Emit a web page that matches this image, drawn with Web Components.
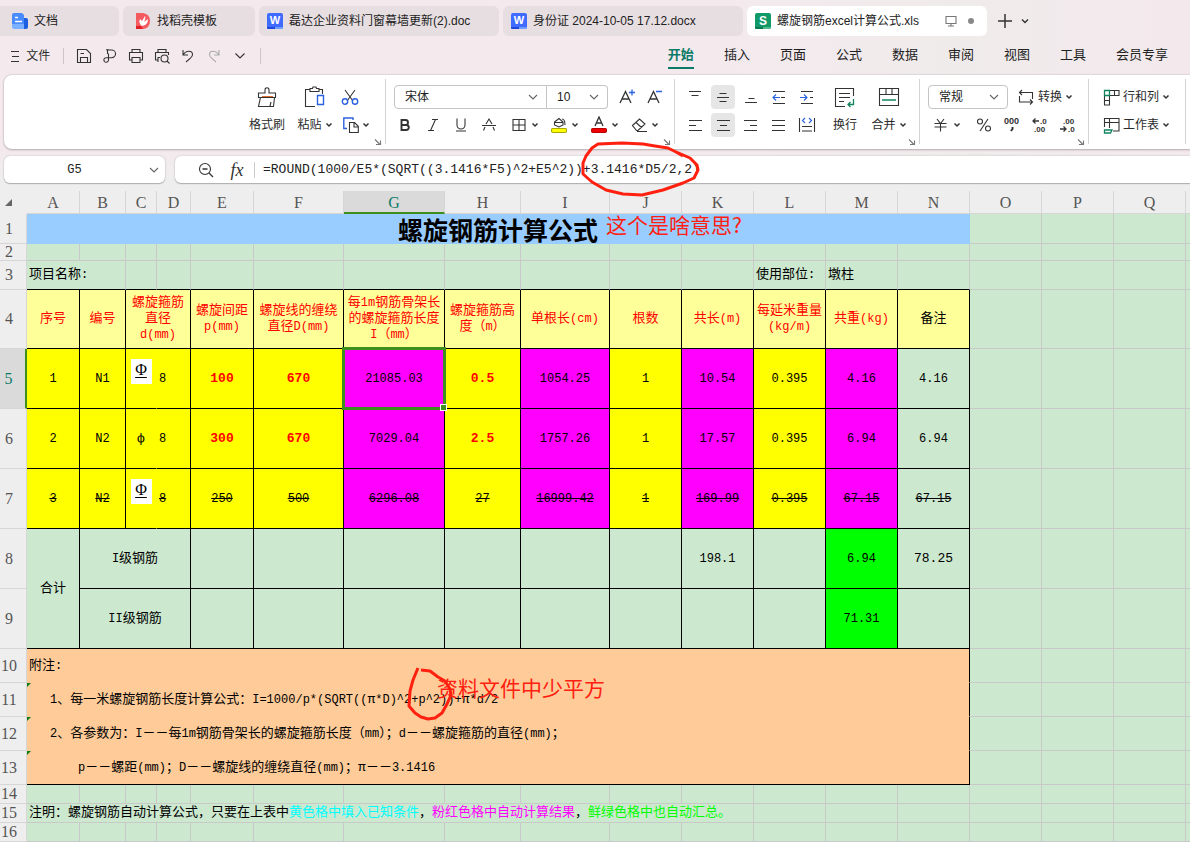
<!DOCTYPE html>
<html lang="zh-CN">
<head>
<meta charset="utf-8">
<title>螺旋钢筋excel计算公式.xls</title>
<style>
html,body{margin:0}
body{font:12px/16px "Liberation Sans","Noto Sans CJK SC",sans-serif;color:#2b2b2b;background:#cce8cf}
</style>
</head>
<body>
<office-app></office-app>
<script>
const define = (name, html, setup) => {
  const tpl = document.createElement('template');
  tpl.innerHTML = html;
  customElements.define(name, class extends HTMLElement {
    constructor() {
      super();
      this.attachShadow({ mode: 'open' }).append(tpl.content.cloneNode(true));
    }
    connectedCallback() {
      if (this.ready) return;
      this.ready = true;
      if (setup) setup(this, this.shadowRoot);
    }
  });
};

const svg = (w, h, body) => `<svg width="${w}" height="${h}" viewBox="0 0 ${w} ${h}" fill="none" stroke="#333" stroke-width="1.1" aria-hidden="true">${body}</svg>`;
const caret = svg(8, 8, '<path d="M1.500 2.500L4 5L6.500 2.500" stroke-width="1.500"/>');
const chevron = svg(10, 8, '<path d="M1 2L5 6L9 2" stroke="#666"/>');
const sans = 'font-family="Liberation Sans" stroke="none" fill="#333"';

const icons = {
  menu: svg(10, 12, '<path d="M1 1.500H9M2 6.500H9M1 11.500H9"/>'),
  save: svg(16, 16, '<path d="M1.500 1.500H10.500L14.500 5.500V14.500H1.500ZM4.500 14V9.500H11.500V14M4.500 5.500H8"/>'),
  link: svg(16, 16, '<path d="M5.500 6V2H9.500A4 3.800 0 0 1 9.500 9.700H4.500A2.300 2.300 0 1 0 6.500 12V5.500M4 1.800H7"/>'),
  print: svg(16, 16, '<path d="M4 4.500V1.500H12V4.500M4 12H1.500V4.500H14.500V12H12M4 9.500H12V14.500H4Z"/>'),
  preview: svg(16, 16, '<path d="M4 4.500V1.500H12V4.500M4 12H1.500V4.500H14.500V7M4 14V9.500H6"/><circle cx="10.500" cy="10.500" r="3.500"/><path d="M13 13L15.500 15.500"/>'),
  undo: svg(16, 16, '<path d="M3 2V7H8M3.300 6.700C6 2 13 2 12.500 7C12 10 9 11 6 14"/>'),
  redo: svg(16, 16, '<g stroke="#aaa"><path d="M13 2V7H8M12.700 6.700C10 2 3 2 3.500 7C4 10 7 11 10 14"/></g>'),
  more: svg(12, 10, '<path d="M1.500 2.500L6 7L10.500 2.500"/>'),
  less: svg(10, 10, '<path d="M2 3.500L5 6.500L8 3.500" stroke-width="1.400"/>'),
  plus: svg(16, 16, '<path d="M8 1V15M1 8H15" stroke-width="1.500"/>'),
  brush: svg(20, 22, '<path d="M8 7V4C8 1 12 1 12 4V7H18.500V11.500H1.500V7ZM3.500 11.500L1.500 20.500H16.500L17.500 11.500M13 20L14 16"/><path d="M5 10.500H16" stroke="#e06c2c"/>'),
  paste: svg(22, 22, '<path d="M6 3.500H1.500V20.500H11M15 3.500H18.500V8M6 5.500V2.500H8.500L9 1H12L12.500 2.500H15V5.500Z"/><path d="M13.500 9.500H19.500V18.500H13.500Z" stroke="#2b62e0" stroke-width="1.400"/>'),
  cut: svg(18, 16, '<path d="M4 1L12 12M14 1L6 12"/><g stroke="#2b62e0" stroke-width="1.400"><circle cx="4" cy="12.500" r="2.700"/><circle cx="14" cy="12.500" r="2.700"/></g>'),
  copy: svg(16, 16, '<path d="M4 11.500H.800V1H10V3" stroke="#2b62e0" stroke-width="1.400"/><path d="M6.500 5.500H11.500L15.300 9.300V15.500H6.500ZM11 6V10H15"/>'),
  grow: svg(18, 18, `<path d="M2 15L7.500 3.500L13 15M4 11H11" stroke-width="1.300"/><path d="M11 4.500H17M14 1.500V7.500" stroke="#2b62e0" stroke-width="1.300"/>`),
  shrink: svg(18, 18, `<path d="M2 15L7.500 3.500L13 15M4 11H11" stroke-width="1.300"/><path d="M10 3.500H16" stroke="#2b62e0" stroke-width="1.300"/>`),
  bold: svg(16, 16, '<path d="M4.500 3H8.500A2.400 2.400 0 0 1 8.500 8H4.500ZM4.500 8H9.300A2.500 2.500 0 0 1 9.300 13H4.500Z" stroke-width="1.900"/>'),
  italic: svg(16, 16, '<path d="M7 2.500H13M3 13.500H9M10.500 2.500L5.500 13.500"/>'),
  underline: svg(16, 16, '<path d="M4 1.500V8A4 4 0 0 0 12 8V1.500M3 14H13"/>'),
  strike: svg(16, 16, '<path d="M1 8.500H15M5 7L8 2L11 7M4 10L2.500 13.500M12 10L13.500 13.500"/>'),
  borders: svg(16, 16, '<path d="M2 2.500H14V13.500H2ZM8 2.500V13.500M2 8H14"/>'),
  fill: svg(16, 18, '<path d="M3.500 6L8 2.500L12 6V9L8 11L3.500 9ZM4 6.500H12M11 3C14 3 14 6 14 9"/><rect x="0.500" y="12.500" width="15" height="4" rx="1.500" fill="#ff0" stroke="#aaa800"/>'),
  color: svg(16, 18, '<path d="M4 10L8 1L12 10M5.500 7H10.500" stroke-width="1.300"/><rect x="0.500" y="12.500" width="15" height="4" rx="1.500" fill="#f00000" stroke="#b00"/>'),
  eraser: svg(16, 16, '<path d="M1.500 8.500L8.500 2L14 7L7 13.500H5.500ZM5 5.500L10.500 10.500M6 14.500H16"/>'),
  top: svg(16, 16, '<path d="M2 2.500H14M4.500 6.500H11.500"/>'),
  middle: svg(16, 16, '<path d="M4.500 4.500H11.500M2 8.500H14M4.500 12.500H11.500"/>'),
  bottom: svg(16, 16, '<path d="M5.500 9.500H11.500M2 13.500H14"/>'),
  outdent: svg(16, 16, '<path d="M2 2.500H14M10 8.500H14M2 14.500H14"/><path d="M9 8.500H2M5 5.500L2 8.500L5 11.500" stroke="#2b62e0"/>'),
  indent: svg(16, 16, '<path d="M2 2.500H14M11 8.500H14M2 14.500H14"/><path d="M1 8.500H8M5 5.500L8 8.500L5 11.500" stroke="#2b62e0"/>'),
  left: svg(16, 16, '<path d="M2 3.500H15M2 8.500H9M2 13.500H15"/>'),
  center: svg(16, 16, '<path d="M2 3.500H15M5 8.500H12M2 13.500H15"/>'),
  right: svg(16, 16, '<path d="M1 3.500H14M7 8.500H14M1 13.500H14"/>'),
  justify: svg(16, 16, '<path d="M1 3.500H14M1 8.500H14M1 13.500H14"/>'),
  distribute: svg(18, 16, '<path d="M1.500 1V15M16.500 1V15M4 9.500H14M4 14H14"/><path d="M7 1L4.500 3.500L7 6M11 1L13.500 3.500L11 6" stroke="#2b62e0"/>'),
  wrap: svg(22, 22, '<path d="M19.500 10V2.500H1.500V20.500H11M5 7.500H16M5 11.500H16M5 15.500H10"/><path d="M19.500 13V18.500H14M16.500 16L14 18.500L16.500 21" stroke="#12845f" stroke-width="1.300"/>'),
  merge: svg(22, 20, '<path d="M1.500 1.500H20.500V18.500H1.500ZM1.500 7.500H20.500M8 1.500V7.500M14 1.500V7.500"/><path d="M4 13H18" stroke="#12845f" stroke-width="1.300"/>'),
  convert: svg(18, 16, '<path d="M5 1L2.500 3.500L5 6M2.500 3.500H15.500V10M13 10.500L15.500 13L13 15.500M15 13H2.500V7" />'),
  yuan: svg(16, 16, '<path d="M4 2L7.500 6.500L11 2M1.500 6.500H13.500M1.500 10H13.500M7.500 6.500V14.500"/>'),
  percent: svg(16, 16, '<circle cx="4" cy="4.500" r="2.500"/><circle cx="12" cy="11.500" r="2.500"/><path d="M12 2L4 14"/>'),
  thousand: svg(18, 18, `<text x="1" y="8" font-size="9" font-weight="bold" ${sans}>000</text><path d="M9.500 11V13L8 15" stroke-width="2"/>`),
  decmore: svg(18, 18, `<text x="9" y="8" font-size="8" font-weight="bold" ${sans}>.0</text><text x="3" y="16" font-size="8" font-weight="bold" ${sans}>.00</text><path d="M8 5H2M4.500 2.500L2 5L4.500 7.500" stroke-width="1.300"/>`),
  decless: svg(18, 18, `<text x="4" y="8" font-size="8" font-weight="bold" ${sans}>.00</text><text x="9" y="16" font-size="8" font-weight="bold" ${sans}>.0</text><path d="M1 13H7M4.500 10.500L7 13L4.500 15.500" stroke-width="1.300"/>`),
  rowcol: svg(17, 17, '<path d="M6.500 1.500H16V6.500H6.500M11.500 1.500V6.500M1.500 6.500V16H6.500V6.500M1.500 11.500H6.500"/><path d="M1.500 1.500H6.500V6.500H1.500Z" stroke="#12845f" stroke-width="1.300"/>'),
  sheet: svg(17, 17, '<path d="M1.500 10V1.500H16V14H10M1.500 5.500H16M6.500 1.500V11"/><path d="M1.500 13H9L7.500 16H1.500Z" stroke="#12845f" stroke-width="1.300"/>'),
  launch: svg(8, 8, '<path d="M1 1.500L6 6.500M6.500 2.500V6.500H2" stroke="#777"/>'),
  zoomout: svg(16, 16, '<circle cx="7" cy="7" r="5.500"/><path d="M4.500 7H9.500M11 11L15 15" stroke-width="1.300"/>')
};

const logos = {
  doc: svg(16, 16, '<g stroke="none"><path d="M2 0H10L12 2V11H0V2Q0 0 2 0Z" fill="#4a8cff"/><path d="M12 5H14Q16 5 16 7V14Q16 16 14 16H12Z" fill="#1c5fe0"/><path d="M0 11H12V16H2Q0 16 0 14Z" fill="#79b0ff"/></g><path d="M3 4.500H6M3 8.500H10" stroke="#fff" stroke-width="1.400"/>'),
  fire: svg(16, 16, '<g stroke="none"><path d="M1 0H8Q15 1 15 8Q15 15 8 16H1Z" fill="#f45b5f"/><path d="M1 13H6L8 16H1Z" fill="#e02028"/><path d="M7 13Q3 10 5 6L7 8L10 3Q11 5 9 9L13 6Q13 12 7 13Z" fill="#fff"/></g>'),
  word: svg(16, 16, '<g stroke="none"><rect width="16" height="16" rx="2" fill="#3f6bff"/><path d="M0 14H8V16H1Q0 16 0 15Z" fill="#1c47dd"/><path d="M8 14H16Q16 16 15 16H8Z" fill="#6f9cff"/><text x="8" y="11" text-anchor="middle" font-family="Liberation Sans" font-weight="bold" font-size="11" fill="#fff">W</text></g>'),
  calc: svg(16, 16, '<g stroke="none"><rect width="16" height="16" rx="2" fill="#119a68"/><path d="M0 14H8V16H1Q0 16 0 15Z" fill="#067a4e"/><path d="M8 14H16Q16 16 15 16H8Z" fill="#4dbb8d"/><text x="8" y="12" text-anchor="middle" font-family="Liberation Sans" font-weight="bold" font-size="12" fill="#fff">S</text></g>')
};

define('tool-button', `<style>
:host{display:block;width:28px;flex:none}
button{all:unset;box-sizing:border-box;width:100%;height:28px;display:flex;align-items:center;justify-content:center;font:inherit;white-space:nowrap;cursor:default}
svg{flex:none;display:block}
.face,.text{display:flex;align-items:center}
:host([active]) button{background:#e6e6e6;border-radius:4px;width:24px;height:24px;margin:2px}
:host([split]){width:40px}
:host([split]) button{justify-content:flex-start;padding-left:8px;gap:4px}
:host([wide]){width:auto}
:host([wide]) button{justify-content:flex-start;gap:3px}
:host([wide]) .text,:host([tall]) .text{gap:3px}
:host([tall]) button{height:56px;display:grid;grid-template-rows:28px 28px;justify-items:center;align-items:center}
</style><button type="button"><span class="face"></span><span class="text"><slot></slot></span></button>`, (el, root) => {
  root.querySelector('.face').innerHTML = icons[el.getAttribute('icon')];
  const text = root.querySelector('.text');
  const arrow = el.hasAttribute('caret') || el.hasAttribute('split');
  if (arrow) text.insertAdjacentHTML('beforeend', caret);
  if (!el.textContent && !arrow) text.remove();
  root.querySelector('button').setAttribute('aria-label', el.getAttribute('hint') || el.textContent);
});

define('pick-list', `<style>
:host{display:block;height:24px;box-sizing:border-box;border:1px solid #c4c4c4;border-radius:4px;background:#fff}
label{display:grid;grid-template-columns:1fr 18px;align-items:center;height:100%}
select{appearance:none;border:0;outline:0;background:none;margin:0;padding:0 18px 0 10px;width:100%;font:inherit;color:#222;grid-area:1/1/2/3}
svg{grid-area:1/2;pointer-events:none}
</style><label><select><option></option></select>${chevron}</label>`, (el, root) => {
  root.querySelector('option').textContent = el.getAttribute('value');
  root.querySelector('select').setAttribute('aria-label', el.getAttribute('hint'));
});

define('doc-tab', `<style>
:host{display:flex;align-items:center;box-sizing:border-box;height:30px;padding:0 12px;gap:6px;border-radius:6px;background:#e7dee1;flex:0 1 132px;min-width:0;white-space:nowrap}
:host([file]){flex-basis:240px;padding:0 8px}
:host([first]){flex-basis:119px;border-radius:0 6px 6px 0}
:host([current]){background:#fff}
svg{flex:none;display:block}
a{color:#222;text-decoration:none;flex:1;overflow:hidden}
.state{display:flex;align-items:center;gap:10px;padding-right:4px}
:host(:not([current])) .state{display:none}
</style><span class="logo"></span><a href="#"><slot></slot></a><span class="state">${svg(12, 12, '<path d="M1 1.500H11V8.500H1ZM6 8.500V11M3 11H9" stroke="#777"/>')}${svg(8, 8, '<circle cx="4" cy="4" r="3" fill="#888" stroke="none"/>')}</span>`, (el, root) => {
  root.querySelector('.logo').innerHTML = logos[el.getAttribute('logo')];
});

define('tab-strip', `<style>
:host{display:flex;gap:4px;padding-top:6px;align-items:center}
.add{display:flex;align-items:center}
.mini{width:12px}
</style>
<doc-tab first logo="doc">文档</doc-tab><doc-tab logo="fire">找稻壳模板</doc-tab>
<doc-tab file logo="word">磊达企业资料门窗幕墙更新(2).doc</doc-tab>
<doc-tab file logo="word">身份证 2024-10-05 17.12.docx</doc-tab>
<doc-tab file current logo="calc">螺旋钢筋excel计算公式.xls</doc-tab>
<span class="add"><tool-button icon="plus" hint="新建"></tool-button><tool-button class="mini" icon="less" hint="标签列表"></tool-button></span>`);

define('menu-bar', `<style>
:host{display:flex;align-items:center;height:39px;padding:0 22px 0 10px}
.file{width:44px;margin-right:9px}
.rule{width:1px;height:16px;background:#cfc6c9}
.quick{display:flex;padding:0 7px}
.quick tool-button{width:26px}
nav{display:flex;gap:30px;margin-left:auto;font-size:13px;height:39px;align-items:center}
nav a{color:#222;text-decoration:none;line-height:20px;padding:3px 0 2px;border-bottom:2px solid transparent;white-space:nowrap}
nav a.on{color:#0b7a68;font-weight:bold;border-color:#0b7a68}
</style>
<tool-button wide class="file" icon="menu">&nbsp;文件</tool-button><span class="rule"></span>
<span class="quick"><tool-button icon="save" hint="保存"></tool-button><tool-button icon="link" hint="输出"></tool-button><tool-button icon="print" hint="打印"></tool-button><tool-button icon="preview" hint="打印预览"></tool-button><tool-button icon="undo" hint="撤销"></tool-button><tool-button icon="redo" hint="恢复"></tool-button><tool-button icon="more" hint="更多"></tool-button></span><span class="rule"></span>
<nav><a class="on" href="#">开始</a><a href="#">插入</a><a href="#">页面</a><a href="#">公式</a><a href="#">数据</a><a href="#">审阅</a><a href="#">视图</a><a href="#">工具</a><a href="#">会员专享</a></nav>`);

define('ribbon-group', `<style>
:host{display:flex;position:relative;box-sizing:border-box;flex:none;margin:4px 0 5px;padding:4px 0 5px;border-right:1px solid #d4d4d4}
.launch{position:absolute;right:3px;bottom:-2px;width:8px;display:flex}
:host([plain]) .launch{display:none}
</style><slot></slot><span class="launch">${icons.launch}</span>`);

define('ribbon-bar', `<style>
:host{display:flex;margin-left:4px;background:#fff;border-radius:8px 0 0 8px;box-shadow:0 0 2px #b9b0b3,0 1px 2px #b9b0b3;overflow:hidden}
.clip{width:382px;justify-content:flex-end}
.font{width:289px;padding-left:5px}
.align{width:245px;padding-left:6px}
.number{width:169px;padding-left:5px}
.cells{width:97px;padding-left:14px}
.row{display:flex;height:28px;align-items:center}
.inset{padding-left:3px}
.big{width:48px}
.mid{width:44px}
.side{width:46px}
.side tool-button{margin-left:2px}
.side .copy{margin-left:4px}
.side .cut{width:18px}
.five{display:grid;grid-template-columns:repeat(5,28px);align-content:start;margin-right:2px}
.face{width:153px;border-radius:4px 0 0 4px}
.size{width:61px;border-radius:0 4px 4px 0;border-left:0;margin-right:5px}
.format{width:80px;margin-right:9px}
.gap{margin-right:5px}
</style>
<ribbon-group class="clip">
 <tool-button tall class="big" icon="brush">格式刷</tool-button><tool-button tall caret class="big" icon="paste">粘贴</tool-button>
 <div class="side"><tool-button class="cut" icon="cut" hint="剪切"></tool-button><tool-button class="copy" wide caret icon="copy" hint="复制"></tool-button></div>
</ribbon-group>
<ribbon-group class="font"><div>
 <div class="row inset"><pick-list class="face" value="宋体" hint="字体"></pick-list><pick-list class="size" value="10" hint="字号"></pick-list><tool-button icon="grow" hint="增大字号"></tool-button><tool-button icon="shrink" hint="减小字号"></tool-button></div>
 <div class="row"><tool-button icon="bold" hint="加粗"></tool-button><tool-button icon="italic" hint="倾斜"></tool-button><tool-button icon="underline" hint="下划线"></tool-button><tool-button icon="strike" hint="删除线"></tool-button><tool-button split icon="borders" hint="边框"></tool-button><tool-button split icon="fill" hint="填充颜色"></tool-button><tool-button split icon="color" hint="字体颜色"></tool-button><tool-button split icon="eraser" hint="清除"></tool-button></div>
</div></ribbon-group>
<ribbon-group class="align">
 <div class="five"><tool-button icon="top" hint="顶端对齐"></tool-button><tool-button active icon="middle" hint="垂直居中"></tool-button><tool-button icon="bottom" hint="底端对齐"></tool-button><tool-button icon="outdent" hint="减少缩进"></tool-button><tool-button icon="indent" hint="增加缩进"></tool-button><tool-button icon="left" hint="左对齐"></tool-button><tool-button active icon="center" hint="水平居中"></tool-button><tool-button icon="right" hint="右对齐"></tool-button><tool-button icon="justify" hint="两端对齐"></tool-button><tool-button icon="distribute" hint="分散对齐"></tool-button></div>
 <tool-button tall class="mid" icon="wrap">换行</tool-button><tool-button tall caret class="mid" icon="merge">合并</tool-button>
</ribbon-group>
<ribbon-group class="number"><div>
 <div class="row inset"><pick-list class="format" value="常规" hint="数字格式"></pick-list><tool-button wide caret icon="convert">转换</tool-button></div>
 <div class="row"><tool-button class="gap" split icon="yuan" hint="货币"></tool-button><tool-button icon="percent" hint="百分比"></tool-button><tool-button icon="thousand" hint="千位分隔"></tool-button><tool-button icon="decmore" hint="增加小数位"></tool-button><tool-button icon="decless" hint="减少小数位"></tool-button></div>
</div></ribbon-group>
<ribbon-group plain class="cells"><div><tool-button wide caret icon="rowcol">行和列</tool-button><tool-button wide caret icon="sheet">工作表</tool-button></div></ribbon-group>`);

define('formula-bar', `<style>
:host{display:flex;gap:10px;padding:7px 0 8px 4px}
.box{display:flex;align-items:center;box-sizing:border-box;height:27px;background:#fff;border-radius:6px;box-shadow:0 0 2px #bbb,0 1px 1px #aaa}
.name{width:161px;padding-right:6px}
.formula{flex:1;border-radius:6px 0 0 6px;padding-left:17px}
input{all:unset;box-sizing:border-box;font:13px/20px "Liberation Mono","Noto Sans CJK SC",monospace;color:#222;flex:1;min-width:0}
.name input{text-align:center;font-size:12px;padding-right:4px}
.fx{font:italic 18px/20px "Liberation Serif",serif;width:34px;text-align:center;color:#333}
.rule{width:1px;height:16px;background:#ccc;margin-right:8px}
</style>
<label class="box name"><input aria-label="名称框" value="G5">${chevron}</label>
<label class="box formula"><tool-button icon="zoomout" hint="缩小"></tool-button><span class="fx">fx</span><span class="rule"></span><input aria-label="编辑栏" value="=ROUND(1000/E5*(SQRT((3.1416*F5)^2+E5^2))+3.1416*D5/2,2)"></label>`);

/* Each cell is [text, class names, column span, row span]. */
const widths = [27, 53, 46, 31, 34, 63, 90, 101, 76, 89, 72, 72, 72, 72, 72, 72, 72, 72];
const pad = n => Array(n).fill(['', '']);
const rest = pad(4);
const Y = 'y b', P = 'p b', R = 'y b red strong', S = ' s';
const phi = '<span class="phi">Φ</span>';
const rows = [
  [30, [['螺旋钢筋计算公式', 'title', 14], ...rest]],
  [17, pad(18)],
  [29, [['项目名称:', 'lt bb', 2], ...Array(9).fill(['', 'bb']), ['使用部位:', 'lt bb'], ['墩柱', 'lt bb'], ['', 'bb'], ...rest]],
  [59, [...[['序号'], ['编号'], ['螺旋箍筋<br>直径<br>d(mm)', 2], ['螺旋间距<br>p(mm)'], ['螺旋线的缠绕<br>直径D(mm)'], ['每1m钢筋骨架长<br>的螺旋箍筋长度<br>I（mm）'], ['螺旋箍筋高<br>度（m）'], ['单根长(cm)'], ['根数'], ['共长(m)'], ['每延米重量<br>(kg/m)'], ['共重(kg)']].map(c => [c[0], 'h b red', c[1]]), ['备注', 'h b'], ...rest]],
  [60, [['1', Y], ['N1', Y], [phi, 'y bb ny pic'], ['8', 'y b lt'], ['100', R], ['670', R], ['21085.03', P + ' sel'], ['0.5', R], ['1054.25', P], ['1', Y], ['10.54', P], ['0.395', Y], ['4.16', P], ['4.16', 'b'], ...rest]],
  [60, [['2', Y], ['N2', Y], ['ф', 'y bb ny'], ['8', 'y b lt'], ['300', R], ['670', R], ['7029.04', P], ['2.5', R], ['1757.26', P], ['1', Y], ['17.57', P], ['0.395', Y], ['6.94', P], ['6.94', 'b'], ...rest]],
  [60, [['3', Y + S], ['N2', Y + S], [phi, 'y bb ny pic'], ['8', 'y b lt s'], ['250', Y + S], ['500', Y + S], ['6296.08', P + S], ['27', Y + S], ['16999.42', P + S], ['1', Y + S], ['169.99', P + S], ['0.395', Y + S], ['67.15', P + S], ['67.15', 'b s'], ...rest]],
  [60, [['合计', 'b', 1, 2], ['I级钢筋', 'b', 3], ...Array(6).fill(['', 'b']), ['198.1', 'b'], ['', 'b'], ['6.94', 'g b'], ['78.25', 'b large'], ...rest]],
  [60, [['II级钢筋', 'b', 3], ...Array(8).fill(['', 'b']), ['71.31', 'g b'], ['', 'b'], ...rest]],
  [34, [['附注:', 'o lt', 14], ...rest]],
  [34, [['1、每一米螺旋钢筋长度计算公式：I=1000/p*(SQRT((π*D)^2+p^2))+π*d/2', 'o lt in1 flag', 14], ...rest]],
  [34, [['2、各参数为：I－－每1m钢筋骨架长的螺旋箍筋长度（mm）；d－－螺旋箍筋的直径(mm)；', 'o lt in1 flag', 14], ...rest]],
  [34, [['p－－螺距(mm)；D－－螺旋线的缠绕直径(mm)；π－－3.1416', 'o lt in2 flag bb', 14], ...rest]],
  [19, pad(18)],
  [19, [['注明：螺旋钢筋自动计算公式，只要在上表中<i class="cy">黄色格中填入已知条件</i>，<i class="mg">粉红色格中自动计算结果</i>，<i class="gr">鲜绿色格中也自动汇总。</i>', 'lt', 11], ...pad(3), ...rest]],
  [19, pad(18)]
];
/* Latin runs sit one size below the Chinese glyphs, as in a Song typeface. */
const mixed = t => t.split(/(<[^>]+>)/).map(p => p[0] === '<' ? p : p.replace(/[\x21-\x7e]+/g, '<span class="l">$&</span>')).join('');
const cell = ([t, c, cs = 1, rs = 1]) =>
  `<td class="${c}${/^[\x20-\x7e]+$/.test(t) ? ' n' : ''}"${cs > 1 ? ` colspan="${cs}"` : ''}${rs > 1 ? ` rowspan="${rs}"` : ''}>${/^[\x20-\x7e]*$/.test(t) ? t : mixed(t)}</td>`;

define('calc-sheet', `<style>
:host{display:block;font:13px/16px "Liberation Mono","Noto Sans CJK SC",monospace;color:#000}
table{width:100%;table-layout:fixed;border-collapse:separate;border-spacing:0;background:#cce8cf}
th,td{box-sizing:border-box;padding:0;border:0 solid #c9c9c9;border-width:0 1px 1px 0;text-align:center;white-space:nowrap;vertical-align:middle}
th{background:#eee;color:#555;font:16px/16px "Liberation Serif",serif;border-color:#d6d6d6}
tbody th{text-align:center;padding-right:8px}
thead th{height:23px;padding-top:2px}
thead th:first-child{border-color:#eee}
thead .on{background:#dadada;color:#0b7a68;border-bottom:2px solid #3f8f1f}
tbody .on{background:#dadada;color:#0b7a68;border-right:2px solid #3f8f1f}
tbody td:last-child,thead th:last-child{border-right:0}
.n,.l{font-size:12px}
.title{background:#9cf;border-color:#9cf;font:bold 25px/28px "Noto Sans CJK SC",sans-serif}
.b{border-color:#000}
.bb{border-bottom-color:#000}
.h{background:#ff9}.y{background:#ff0}.p{background:#f0f}.g{background:#0f0}
.o{background:#fc9;border-color:#000;border-bottom-color:#fc9}
.o.bb{border-bottom-color:#000}
.ny{border-right-color:#ff0}
.red{color:#f00}
.strong{font-size:13px;font-weight:bold}
.large{font-size:13px}
.s{text-decoration:line-through}
.lt{text-align:left;padding-left:2px}
.in1{padding-left:23px}.in2{padding-left:51px}
.pic{padding-bottom:14px}
.phi{display:inline-block;width:21px;height:25px;background:#fff;font:16px/22px "Liberation Serif",serif;text-decoration:underline;text-underline-offset:2px;vertical-align:middle}
.sel,.flag{position:relative}
.sel::before{content:"";position:absolute;inset:-2px;border:3px solid #3f8f1f}
.sel::after{content:"";position:absolute;right:-3px;bottom:-3px;width:5px;height:5px;background:#3f8f1f;border:1px solid #fff}
.flag::before{content:"";position:absolute;left:0;top:0;border:2px solid transparent;border-top-color:#0a7a1a;border-left-color:#0a7a1a}
i{font-style:normal}
.cy{color:#0ff}.mg{color:#f0f}.gr{color:#0f0}
.corner{display:block;margin:0 0 0 5px}
</style><table><colgroup></colgroup><thead></thead><tbody></tbody></table>`, (el, root) => {
  root.querySelector('colgroup').innerHTML = widths.map(w => `<col style="width:${w}px">`).join('') + '<col>';
  root.querySelector('thead').innerHTML = '<tr><th>' + svg(8, 8, '<path d="M7 0V7H0Z" fill="#666" stroke="none"/>').replace('<svg', '<svg class="corner"') + '</th>' +
    [...'ABCDEFGHIJKLMNOPQ', ''].map(c => `<th scope="col"${c === 'G' ? ' class="on"' : ''}>${c}</th>`).join('') + '</tr>';
  root.querySelector('tbody').innerHTML = rows.map(([h, cells], i) =>
    `<tr style="height:${h}px"><th scope="row"${i === 4 ? ' class="on"' : ''}>${i + 1}</th>${cells.map(cell).join('')}</tr>`).join('');
});

/* Red pen strokes and remarks drawn over the sheet. */
define('pen-notes', `<style>
:host{position:absolute;inset:0;pointer-events:none;color:#ff2010;font:21px/24px "Noto Sans CJK SC",sans-serif}
svg,span{position:absolute;white-space:nowrap}
.ring1{left:578px;top:138px}.ring2{left:404px;top:664px}
.note1{left:606px;top:212px}.note2{left:437px;top:675px}
</style>
<svg class="ring1" width="126" height="62" viewBox="578 138 126 62" fill="none" stroke="#ff2010" stroke-width="3" stroke-linejoin="round"><path d="M683 156L676 152L668 148L655 146L643 144L622 143L598 144L592 148L586 156L583 163L583 174L592 182L606 190L623 194L642 195L663 190L683 183L694 178L698 170L697 165L690 158L674 151L680 154"/></svg>
<svg class="ring2" width="52" height="60" viewBox="404 664 52 60" fill="none" stroke="#ff2010" stroke-width="3" stroke-linejoin="round"><path d="M418 668L413 680L410 691L409 706L415 713L421 717L428 719L435 718L442 713L447 704L451 695L450 689L445 681L438 677L430 671L421 670"/></svg>
<span class="note1">这个是啥意思?</span><span class="note2">资料文件中少平方</span>`);

define('office-app', `<style>
:host{display:block;position:relative;overflow:hidden;background:#eee}
header{background:linear-gradient(180deg,transparent 150px,#eee 184px),linear-gradient(90deg,#f4eaee 0,#f4eaee 60%,#f0ebeb 80%,#f3e9ed 100%)}
</style>
<header><tab-strip></tab-strip><menu-bar></menu-bar><ribbon-bar></ribbon-bar><formula-bar></formula-bar></header>
<main><calc-sheet></calc-sheet></main><pen-notes></pen-notes>`);
</script>
</body>
</html>
